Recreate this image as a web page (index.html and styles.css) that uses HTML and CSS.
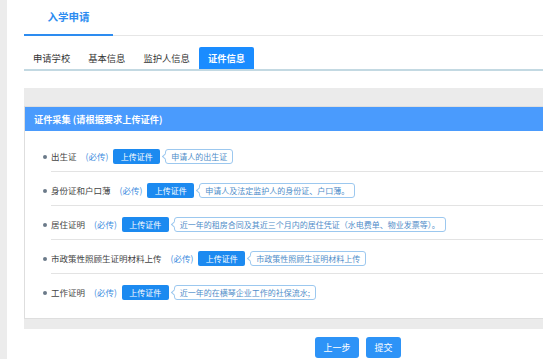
FILE: index.html
```html
<!DOCTYPE html>
<html lang="zh-CN">
<head>
  <meta charset="UTF-8" />
  <meta name="viewport" content="width=device-width, initial-scale=1.0" />
  <title>入学申请</title>
  <link rel="stylesheet" href="styles.css">
</head>
<body>
  <div class="page">
    <div class="title-bar">
      <div class="title">入学申请</div>
    </div>

    <div class="tabs">
      <a class="tab">申请学校</a>
      <a class="tab">基本信息</a>
      <a class="tab">监护人信息</a>
      <a class="tab active">证件信息</a>
    </div>

    <div class="card-wrap">
      <div class="panel">
        <div class="panel-head">证件采集 (请根据要求上传证件)</div>
        <ul class="doc-list">
          <li>
            <span class="label">出生证</span>
            <span class="must">(必传)</span>
            <button class="upload">上传证件</button>
            <span class="tip">申请人的出生证</span>
          </li>
          <li>
            <span class="label">身份证和户口薄</span>
            <span class="must">(必传)</span>
            <button class="upload">上传证件</button>
            <span class="tip">申请人及法定监护人的身份证、户口薄。</span>
          </li>
          <li>
            <span class="label">居住证明</span>
            <span class="must">(必传)</span>
            <button class="upload">上传证件</button>
            <span class="tip">近一年的租房合同及其近三个月内的居住凭证（水电费单、物业发票等）。</span>
          </li>
          <li>
            <span class="label">市政策性照顾生证明材料上传</span>
            <span class="must">(必传)</span>
            <button class="upload">上传证件</button>
            <span class="tip">市政策性照顾生证明材料上传</span>
          </li>
          <li>
            <span class="label">工作证明</span>
            <span class="must">(必传)</span>
            <button class="upload">上传证件</button>
            <span class="tip">近一年的在横琴企业工作的社保流水;</span>
          </li>
        </ul>
      </div>
    </div>

    <div class="actions">
      <button class="btn">上一步</button>
      <button class="btn">提交</button>
    </div>
  </div>
</body>
</html>
```

FILE: styles.css
```css
body {
  margin: 0;
  background: #ececec;
  font-family: "Noto Sans CJK SC", "Microsoft YaHei", sans-serif;
  color: #333;
}

.page {
  margin-left: 7px;
  min-height: 100vh;
  background: #fff;
  padding-left: 17px;
  box-sizing: border-box;
}

/* 顶部标题 */
.title-bar {
  display: flex;
  border-bottom: 1px solid #e6e6e6;
  height: 35px;
}

.title {
  width: 89px;
  text-align: center;
  font-size: 10.5px;
  font-weight: bold;
  color: #2d8cf0;
  line-height: 34px;
  border-bottom: 2px solid #2d8cf0;
  margin-bottom: -1px;
}

/* 选项卡 */
.tabs {
  display: flex;
  margin-top: 11px;
  border-bottom: 2px solid #c3d9e2;
}

.tab {
  padding: 0 9px;
  font-size: 9.3px;
  line-height: 22px;
  color: #333;
  cursor: pointer;
}

.tab.active {
  background: #1a8cff;
  color: #fff;
  font-weight: bold;
  border-radius: 2px 2px 0 0;
}

/* 证件采集 */
.card-wrap {
  margin-top: 17px;
  background: #ebebeb;
  padding: 18px 0 10px 0;
}

.panel {
  background: #fff;
  border: 1px solid #dedede;
  border-right: none;
}

.panel-head {
  background: #4a9bfd;
  color: #fff;
  font-size: 9.2px;
  font-weight: bold;
  height: 24px;
  line-height: 24px;
  padding-left: 9px;
}

.doc-list {
  list-style: none;
  margin: 0;
  padding: 7px 0 11px 26px;
}

.doc-list li {
  display: flex;
  align-items: center;
  padding: 11px 0 7px;
  border-bottom: 1px solid #e3e3e3;
}

.doc-list li:last-child {
  border-bottom: none;
}

.doc-list li::before {
  content: "";
  width: 4px;
  height: 4px;
  border-radius: 50%;
  background: #6b7a89;
  margin-left: -8px;
  margin-right: 4px;
}

.label {
  font-size: 8.5px;
  line-height: 15px;
  color: #444;
}

.must {
  font-size: 8.5px;
  line-height: 15px;
  color: #3d8ce0;
  margin: 0 5px 0 9px;
}

.upload {
  font-family: inherit;
  background: #1c8af0;
  color: #fff;
  border: none;
  font-size: 8px;
  height: 15px;
  line-height: 15px;
  padding: 0 7.5px;
  border-radius: 2px;
  cursor: pointer;
}

.tip {
  position: relative;
  margin-left: 5px;
  border: 1px solid #9cc8ef;
  border-radius: 3px;
  font-size: 8px;
  line-height: 13px;
  color: #4f8dc9;
  padding: 0 5px;
}

.tip::before {
  content: "";
  position: absolute;
  left: -3px;
  top: 50%;
  width: 4px;
  height: 4px;
  margin-top: -2.5px;
  background: #fff;
  border-left: 1px solid #9cc8ef;
  border-bottom: 1px solid #9cc8ef;
  transform: rotate(45deg);
}

/* 底部按钮 */
.actions {
  display: flex;
  gap: 7px;
  margin-top: 8px;
  padding-left: 291px;
}

.btn {
  font-family: inherit;
  background: #2d93f7;
  color: #fff;
  border: none;
  height: 21px;
  font-size: 9px;
  padding: 0 8.5px;
  border-radius: 3px;
  cursor: pointer;
}
```
